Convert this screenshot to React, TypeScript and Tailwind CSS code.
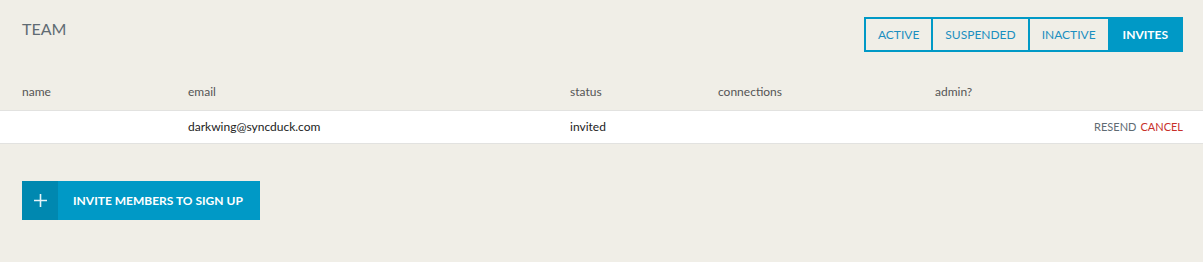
const tabs = ['ACTIVE', 'SUSPENDED', 'INACTIVE', 'INVITES']

export default function App() {
  return (
    <div className="min-h-[262px] w-[1203px] bg-[#f0eee7] font-['Lato','Liberation_Sans',sans-serif]">
      <div className="flex items-start justify-between pl-[22px] pr-[20px] pt-[17px]">
        <h1 className="mt-[2px] text-[16px] leading-[20px] text-[#5f6b73]">TEAM</h1>
        <div className="flex h-[35px]">
          {tabs.map((t, i) => (
            <div
              key={t}
              className={
                i === 3
                  ? 'flex items-center border-2 border-[#0099c6] bg-[#0099c6] px-[13px] text-[12px] font-bold text-white'
                  : 'flex items-center border-2 border-r-0 border-[#0099c6] px-[12px] text-[12px] text-[#1b8fc0]'
              }
            >
              {t}
            </div>
          ))}
        </div>
      </div>

      <div className="mt-[31px] flex h-[27px] items-start text-[12px] text-[#555]">
        <div className="w-[188px] pl-[22px]">name</div>
        <div className="w-[382px]">email</div>
        <div className="w-[148px]">status</div>
        <div className="w-[217px]">connections</div>
        <div>admin?</div>
      </div>

      <div className="flex h-[34px] items-center border-y border-[#e2e2e0] bg-white text-[12px] text-[#222]">
        <div className="w-[188px]" />
        <div className="w-[382px]">darkwing@syncduck.com</div>
        <div className="w-[148px]">invited</div>
        <div className="flex flex-1 justify-end gap-[4px] pr-[20px] text-[11px]">
          <span className="text-[#5f6b73]">RESEND</span>
          <span className="text-[#c8302a]">CANCEL</span>
        </div>
      </div>

      <div className="pl-[22px] pt-[37px]">
        <button className="flex h-[39px] w-[238px] items-stretch bg-[#0099c6] text-white">
          <span className="flex w-[36px] items-center justify-center bg-[#0088b0]">
            <svg width="13" height="13" viewBox="0 0 13 13">
              <path d="M6.5 0V13M0 6.5H13" stroke="#e6f4f9" strokeWidth="1.6" />
            </svg>
          </span>
          <span className="flex items-center pl-[15px] text-[12px] font-bold">INVITE MEMBERS TO SIGN UP</span>
        </button>
      </div>
    </div>
  )
}
